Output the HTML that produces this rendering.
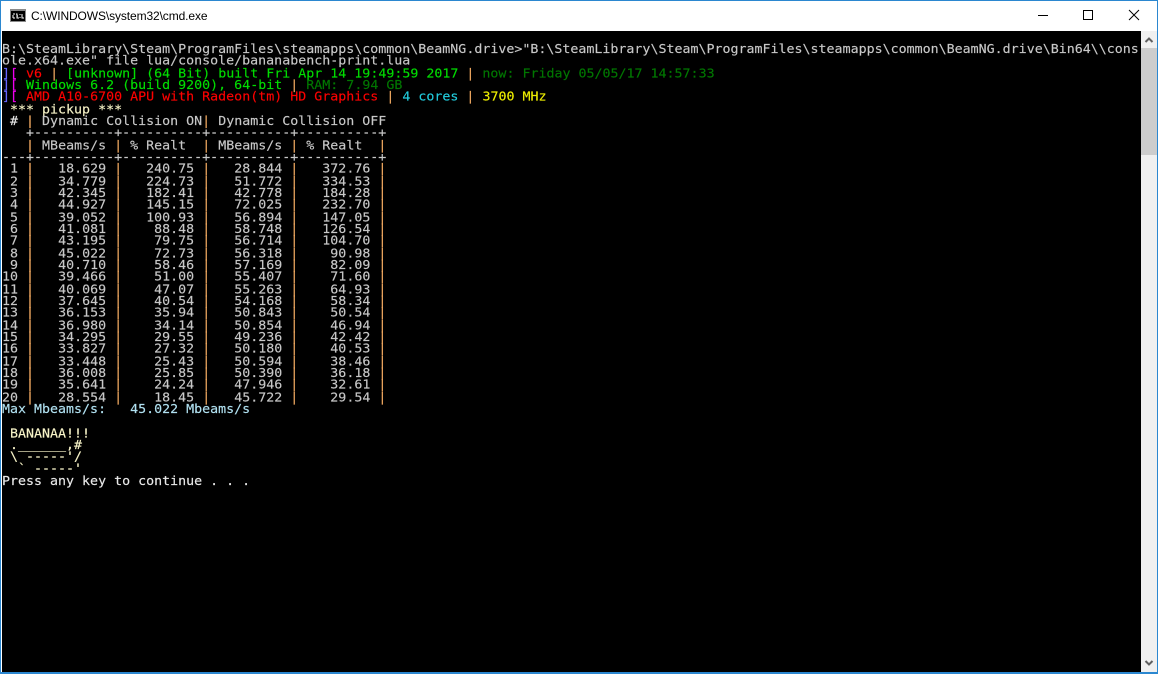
<!DOCTYPE html>
<html><head><meta charset="utf-8"><style>
html,body{margin:0;padding:0;background:#fff;width:1158px;height:674px;overflow:hidden}
#win{position:absolute;left:0;top:0;width:1158px;height:674px;background:#fff;overflow:hidden}
#title{position:absolute;left:31px;top:8px;font:12px/16px "Liberation Sans",sans-serif;letter-spacing:-.11px;color:#000;white-space:pre}
#con{position:absolute;left:2px;top:31px;width:1139px;height:641px;background:#000;overflow:hidden}
pre{position:absolute;left:0;top:13px;margin:0;font:13.3px/13.333px "DejaVu Sans Mono","Liberation Mono",monospace;color:#c8c8c8;white-space:pre;transform:scaleY(.9);transform-origin:0 0;-webkit-text-stroke:.15px currentColor}
.o{color:#f0a860}.g{color:#0d0}.d{color:#070}.r{color:#f00}.c{color:#2cd}.y{color:#ee0}.b{color:#66f}.m{color:#e0e}
.l{color:#b0e0f0}.w{color:#e8e8e8}.p{color:#f8f4c8}
#bl{position:absolute;left:0;top:0;width:1px;height:674px;background:#2b87d0}
#br{position:absolute;right:0;top:0;width:1px;height:674px;background:#2b87d0}
#bt{position:absolute;left:0;top:0;width:1158px;height:1px;background:#2b87d0}
#bb{position:absolute;left:0;bottom:0;width:1158px;height:2px;background:#2b87d0}
#sb{position:absolute;left:1141px;top:31px;width:16px;height:641px;background:#f0f0f0}
#th{position:absolute;left:0;top:17px;width:16px;height:107px;background:#cdcdcd}
svg{position:absolute}
</style></head><body><div id="win">
<div id="bl"></div><div id="br"></div><div id="bt"></div>
<svg style="left:10px;top:9px" width="16" height="14" viewBox="0 0 16 14"><rect x="0" y="0" width="16" height="13" fill="#8a8a8a"/><rect x="1" y="2" width="14" height="10" fill="#000"/><path d="M3 5h2M3 6v3M3 9h2M6 5h1v4h2M7 7h1M10 5v1M10 8v1M12 5v4h2" stroke="#fff" stroke-width="1" fill="none"/></svg>
<div id="title">C:\WINDOWS\system32\cmd.exe</div>
<svg style="left:1028px;top:9px" width="100" height="20" viewBox="0 0 100 20" fill="none" stroke="#000" stroke-width="1"><path d="M10 6.500h10"/><rect x="55.500" y="1.500" width="9" height="9"/></svg>
<svg style="left:1128px;top:9px" width="14" height="14" viewBox="0 0 14 14" fill="none" stroke="#000" stroke-width="1"><path d="M1 1l10 10M11 1L1 11"/></svg>
<div id="con"><pre>B:\SteamLibrary\Steam\ProgramFiles\steamapps\common\BeamNG.drive&gt;"B:\SteamLibrary\Steam\ProgramFiles\steamapps\common\BeamNG.drive\Bin64\\cons
ole.x64.exe" file lua/console/bananabench-print.lua
<span class="b">]</span><span class="m">[</span> <span class="r">v6</span> <span class="o">|</span> <span class="g">[unknown] (64 Bit) built Fri Apr 14 19:49:59 2017</span> <span class="o">|</span> <span class="d">now: Friday 05/05/17 14:57:33</span>
<span class="b">]</span><span class="m">[</span> <span class="g">Windows 6.2 (build 9200), 64-bit</span> <span class="o">|</span> <span class="d">RAM: 7.94 GB</span>
<span class="b">]</span><span class="m">[</span> <span class="r">AMD A10-6700 APU with Radeon(tm) HD Graphics</span> <span class="o">|</span> <span class="c">4 cores</span> <span class="o">|</span> <span class="y">3700 MHz</span>
<span class="p"> *** pickup ***</span>
<span class="w"> # </span><span class="o">|</span> Dynamic Collision ON<span class="o">|</span> Dynamic Collision OFF
   +----------+----------+----------+----------+
   <span class="o">|</span> MBeams/s <span class="o">|</span> % Realt  <span class="o">|</span> MBeams/s <span class="o">|</span> % Realt  <span class="o">|</span>
---+----------+----------+----------+----------+
 1 <span class="o">|</span>   18.629 <span class="o">|</span>   240.75 <span class="o">|</span>   28.844 <span class="o">|</span>   372.76 <span class="o">|</span>
 2 <span class="o">|</span>   34.779 <span class="o">|</span>   224.73 <span class="o">|</span>   51.772 <span class="o">|</span>   334.53 <span class="o">|</span>
 3 <span class="o">|</span>   42.345 <span class="o">|</span>   182.41 <span class="o">|</span>   42.778 <span class="o">|</span>   184.28 <span class="o">|</span>
 4 <span class="o">|</span>   44.927 <span class="o">|</span>   145.15 <span class="o">|</span>   72.025 <span class="o">|</span>   232.70 <span class="o">|</span>
 5 <span class="o">|</span>   39.052 <span class="o">|</span>   100.93 <span class="o">|</span>   56.894 <span class="o">|</span>   147.05 <span class="o">|</span>
 6 <span class="o">|</span>   41.081 <span class="o">|</span>    88.48 <span class="o">|</span>   58.748 <span class="o">|</span>   126.54 <span class="o">|</span>
 7 <span class="o">|</span>   43.195 <span class="o">|</span>    79.75 <span class="o">|</span>   56.714 <span class="o">|</span>   104.70 <span class="o">|</span>
 8 <span class="o">|</span>   45.022 <span class="o">|</span>    72.73 <span class="o">|</span>   56.318 <span class="o">|</span>    90.98 <span class="o">|</span>
 9 <span class="o">|</span>   40.710 <span class="o">|</span>    58.46 <span class="o">|</span>   57.169 <span class="o">|</span>    82.09 <span class="o">|</span>
10 <span class="o">|</span>   39.466 <span class="o">|</span>    51.00 <span class="o">|</span>   55.407 <span class="o">|</span>    71.60 <span class="o">|</span>
11 <span class="o">|</span>   40.069 <span class="o">|</span>    47.07 <span class="o">|</span>   55.263 <span class="o">|</span>    64.93 <span class="o">|</span>
12 <span class="o">|</span>   37.645 <span class="o">|</span>    40.54 <span class="o">|</span>   54.168 <span class="o">|</span>    58.34 <span class="o">|</span>
13 <span class="o">|</span>   36.153 <span class="o">|</span>    35.94 <span class="o">|</span>   50.843 <span class="o">|</span>    50.54 <span class="o">|</span>
14 <span class="o">|</span>   36.980 <span class="o">|</span>    34.14 <span class="o">|</span>   50.854 <span class="o">|</span>    46.94 <span class="o">|</span>
15 <span class="o">|</span>   34.295 <span class="o">|</span>    29.55 <span class="o">|</span>   49.236 <span class="o">|</span>    42.42 <span class="o">|</span>
16 <span class="o">|</span>   33.827 <span class="o">|</span>    27.32 <span class="o">|</span>   50.180 <span class="o">|</span>    40.53 <span class="o">|</span>
17 <span class="o">|</span>   33.448 <span class="o">|</span>    25.43 <span class="o">|</span>   50.594 <span class="o">|</span>    38.46 <span class="o">|</span>
18 <span class="o">|</span>   36.008 <span class="o">|</span>    25.85 <span class="o">|</span>   50.390 <span class="o">|</span>    36.18 <span class="o">|</span>
19 <span class="o">|</span>   35.641 <span class="o">|</span>    24.24 <span class="o">|</span>   47.946 <span class="o">|</span>    32.61 <span class="o">|</span>
20 <span class="o">|</span>   28.554 <span class="o">|</span>    18.45 <span class="o">|</span>   45.722 <span class="o">|</span>    29.54 <span class="o">|</span>
<span class="l">Max Mbeams/s:   45.022 Mbeams/s</span>

<span class="p"> BANANAA!!!
 .______,#
 \ -----'/
  ` -----'</span>
<span class="w">Press any key to continue . . .</span></pre></div>
<div id="sb"><div id="th"></div>
<svg style="left:3px;top:5px" width="10" height="8" viewBox="0 0 10 8" fill="none" stroke="#606060" stroke-width="2"><path d="M1.500 6L5 2.500 8.500 6"/></svg>
<svg style="left:3px;top:628px" width="10" height="8" viewBox="0 0 10 8" fill="none" stroke="#606060" stroke-width="2"><path d="M1.500 2L5 5.500 8.500 2"/></svg>
</div>
<div id="bb"></div>
</div></body></html>
